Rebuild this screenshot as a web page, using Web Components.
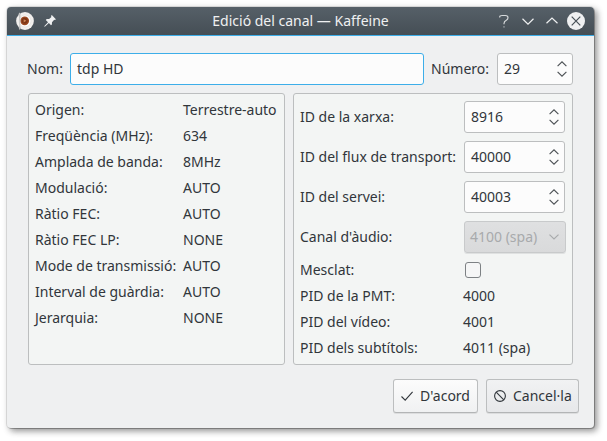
<!DOCTYPE html>
<html lang="ca">
<head>
<meta charset="utf-8">
<title>Edició del canal — Kaffeine</title>
<style>
html,body{margin:0;width:607px;height:441px;background:#fff;overflow:hidden}
body{box-sizing:border-box;padding:7px 13px 13px 7px;font:14px/20px "Noto Sans",sans-serif;font-feature-settings:"locl" 0;color:#31363b}
</style>
</head>
<body>
<dialog-window heading="Edició del canal — Kaffeine"><channel-form></channel-form></dialog-window>
<script>
const define=(name,html,setup)=>customElements.define(name,class extends HTMLElement{
  constructor(){super();this.attachShadow({mode:'open'}).innerHTML=html}
  connectedCallback(){if(setup)setup(this,this.shadowRoot)}
});

define('app-icon',`<style>:host{display:block;width:20px;height:20px}svg{display:block}</style>
<svg width="20" height="20" viewBox="0 0 20 20">
<circle cx="10" cy="10" r="8.900" fill="#f1efed"/><circle cx="10" cy="10" r="6" fill="#fff" stroke="#dedad6" stroke-width=".6"/>
<circle cx="9.700" cy="9.800" r="4.400" fill="#9c4a22"/><circle cx="9.700" cy="9.800" r="3" fill="#7d3414"/><path d="M8.700 8.200l2.700 1.600-2.700 1.600z" fill="#c98458"/>
<path d="M4.600 1.500C3.500 2 3.300 4 4 5.500L4.300 14.500Q3 17.500 4.800 19.300Q6.600 17.500 5.300 14.500L5.500 5Q6 2 4.600 1.500Z" fill="#c6c6c5"/></svg>`);

define('pin-icon',`<style>:host{display:block;width:12px;height:12px}svg{display:block}</style>
<svg width="12" height="12" viewBox="0 0 12 12"><path d="M7.800.1L11.900 4.200L11 5.100L10.200 4.700L8 7.200L7.900 9.500L7 10.300L4.900 8.100L.8 11.800L.2 11.300L4 7.200L1.800 5L2.700 4L5.100 4L7.400 2L7 1Z" fill="#eff0f1"/></svg>`);

define('window-controls',`<style>:host{display:flex;gap:6px;align-items:center}svg{display:block}</style>
<svg width="18" height="18" viewBox="0 0 18 18" fill="none" stroke="#d5d8da" stroke-width="1.150"><path d="M4.700 5.600V4.900Q4.700 3.500 7 3.500H10.500Q13 3.500 13 5.800Q13 7.300 11.300 8.300Q9 9.500 9 11.500V12.200"/><path d="M9 14.200V15.600" stroke="#a0a6aa" stroke-width="1.500"/></svg>
<svg width="18" height="18" viewBox="0 0 18 18" fill="none" stroke="#eff0f1" stroke-width="1.200"><path d="M3.500 6.800L9 12.100L14.500 6.800"/></svg>
<svg width="18" height="18" viewBox="0 0 18 18" fill="none" stroke="#eff0f1" stroke-width="1.200"><path d="M3.500 11.300L9 6L14.500 11.300"/></svg>
<svg width="18" height="18" viewBox="0 0 18 18"><circle cx="9" cy="9" r="9" fill="#eff0f1"/><path d="M4.700 4.700L13.300 13.300M13.300 4.700L4.700 13.300" stroke="#475057" stroke-width="1.200"/></svg>`);

define('dialog-window',`<style>
:host{display:flex;flex-direction:column;box-sizing:border-box;width:587px;height:421px;border-radius:4px;background:#eff0f1;box-shadow:0 0 0 1px rgba(0,0,0,.09),1px 1px 0 rgba(0,0,0,.18),3px 3px 6px rgba(0,0,0,.38),2px 2px 10px rgba(0,0,0,.1)}
header{box-sizing:border-box;height:29px;display:grid;grid-template-columns:90px 1fr 90px;align-items:center;border-radius:4px 4px 0 0;background:linear-gradient(#566068,#454e55);border-bottom:1px solid #3daee9;color:#eff0f1}
.l{display:flex;gap:9px;align-items:center;padding-left:8px}h1{font:inherit;margin:0;text-align:center;white-space:nowrap}
window-controls{justify-self:end;padding-right:9px}
</style><header><div class="l"><app-icon></app-icon><pin-icon></pin-icon></div><h1></h1><window-controls></window-controls></header><slot></slot>`,
(h,r)=>r.querySelector('h1').textContent=h.getAttribute('heading'));

define('text-field',`<style>:host{display:flex;align-items:center;box-sizing:border-box;height:32px;padding:0 6px;border:1px solid #3daee9;border-radius:3px;background:#fcfcfc}</style><slot></slot>`);

define('spin-box',`<style>:host{display:flex;align-items:center;justify-content:space-between;box-sizing:border-box;height:32px;padding:0 5px 0 6px;border:1px solid #bcbebf;border-radius:3px;background:#fcfcfc}svg{display:block}</style><slot></slot>
<svg width="10" height="16" viewBox="0 0 10 16" fill="none" stroke="#4d5256" stroke-width="1.150"><path d="M.6 5.200L5 .9L9.400 5.200M.6 10.800L5 15.100L9.400 10.800"/></svg>`);

define('combo-box',`<style>:host{display:flex;align-items:center;justify-content:space-between;box-sizing:border-box;height:32px;padding:0 6px 0 5px;border:1px solid #c8cacb;border-radius:3px;background:linear-gradient(#dfe0e1,#d9dadb);color:#a8aaac;box-shadow:0 1px 0 #dfe1e1}svg{display:block}</style><slot></slot>
<svg width="10" height="8" viewBox="0 0 10 8" fill="none" stroke="#a8aaac" stroke-width="1.150"><path d="M.5 1.600L5 6L9.500 1.600"/></svg>`);

define('check-box',`<style>:host{display:block;box-sizing:border-box;width:16px;height:16px;border:1px solid #7d8184;border-radius:3px;background:#f5f6f6}</style>`);

define('group-box',`<style>:host{display:block;box-sizing:border-box;border:1px solid #bcbebf;border-radius:3px;background:#f3f5f4}</style><slot></slot>`);

define('form-row',`<style>:host{display:grid;grid-template-columns:var(--label) 1fr;align-items:center;height:26px;white-space:nowrap}</style><span></span><slot></slot>`,
(h,r)=>r.querySelector('span').textContent=h.getAttribute('label'));

define('push-button',`<style>:host{display:flex;align-items:center;gap:7px;box-sizing:border-box;height:34px;padding:0 0 1px 7px;border:1px solid #bcbebf;border-bottom-color:#b3b5b6;border-radius:3px;background:linear-gradient(#f1f2f3,#e7e8ea);box-shadow:0 1px 0 rgba(0,0,0,.08);white-space:nowrap}:host([primary]){background:linear-gradient(#fcfcfc,#f0f1f2)}</style><slot name="icon"></slot><slot></slot>`);

define('channel-form',`<style>
:host{display:block;padding:17px 15px 0 20px}
.name{display:flex;align-items:center;height:32px}.name .a{width:43px}.name .b{width:66px;margin-left:7px}
.name text-field{width:354px}.name spin-box{width:76px;margin-left:0}
.groups{display:flex;gap:8px;margin:8px 0 0 1px}
.left{--label:148px;width:257px;height:272px;padding:3px 0 0 6px}
.right{--label:163px;width:280px;height:272px;padding:3px 0 0 6px}
.tall{height:40px}.right .tall>*{width:101px;margin-left:1px}
.right .tall>combo-box{width:102px}
check-box{margin-left:2px}
.actions{display:flex;justify-content:flex-end;gap:8px;margin-top:14px}
svg{display:block}
</style>
<div class="name"><span class="a">Nom:</span><text-field>tdp HD</text-field><span class="b">Número:</span><spin-box>29</spin-box></div>
<div class="groups">
<group-box class="left">
<form-row label="Origen:"><span>Terrestre-auto</span></form-row>
<form-row label="Freqüència (MHz):"><span>634</span></form-row>
<form-row label="Amplada de banda:"><span>8MHz</span></form-row>
<form-row label="Modulació:"><span>AUTO</span></form-row>
<form-row label="Ràtio FEC:"><span>AUTO</span></form-row>
<form-row label="Ràtio FEC LP:"><span>NONE</span></form-row>
<form-row label="Mode de transmissió:"><span>AUTO</span></form-row>
<form-row label="Interval de guàrdia:"><span>AUTO</span></form-row>
<form-row label="Jerarquia:"><span>NONE</span></form-row>
</group-box>
<group-box class="right">
<form-row class="tall" label="ID de la xarxa:"><spin-box>8916</spin-box></form-row>
<form-row class="tall" label="ID del flux de transport:"><spin-box>40000</spin-box></form-row>
<form-row class="tall" label="ID del servei:"><spin-box>40003</spin-box></form-row>
<form-row class="tall" label="Canal d'àudio:"><combo-box>4100 (spa)</combo-box></form-row>
<form-row label="Mesclat:"><check-box></check-box></form-row>
<form-row label="PID de la PMT:"><span>4000</span></form-row>
<form-row label="PID del vídeo:"><span>4001</span></form-row>
<form-row label="PID dels subtítols:"><span>4011 (spa)</span></form-row>
</group-box>
</div>
<div class="actions">
<push-button primary style="width:85px"><svg slot="icon" width="12" height="12" viewBox="0 0 12 12" fill="none" stroke="#31363b" stroke-width="1.100"><path d="M.5 6.500L4.200 10.200L11.600 1.800"/></svg>D'acord</push-button>
<push-button style="width:93px"><svg slot="icon" width="12" height="12" viewBox="0 0 12 12" fill="none" stroke="#31363b" stroke-width="1.100"><circle cx="6" cy="6" r="5.400"/><path d="M2.200 2.200L9.800 9.800"/></svg>Cancel·la</push-button>
</div>`);
</script>
</body>
</html>
